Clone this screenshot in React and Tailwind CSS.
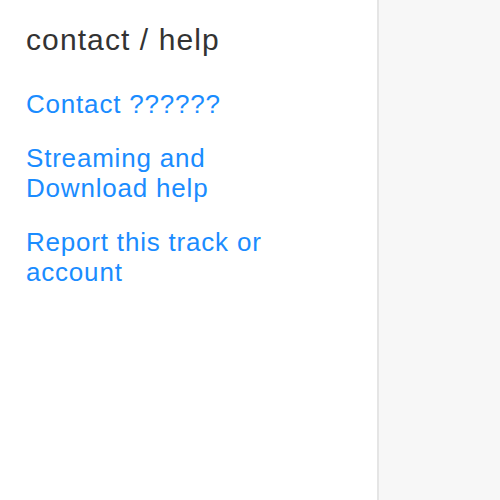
export default function App() {
  return (
    <div className="flex h-[500px] w-[500px] overflow-hidden" style={{ fontFamily: '"Liberation Sans", Arial, sans-serif' }}>
      <div className="w-[379px] shrink-0 border-r-2 border-[#e5e5e5] bg-white pl-[26px] pt-[25px]">
        <h2 className="text-[30px] leading-[30px] tracking-[1.1px] text-[#333333]">contact / help</h2>
        <div className="mt-[34px] flex flex-col gap-[24px] pr-[80px] text-[26px] leading-[30px] tracking-[0.8px] text-[#1a8cff]">
          <a>Contact ??????</a>
          <a>Streaming and Download help</a>
          <a>Report this track or account</a>
        </div>
      </div>
      <div className="flex-1 bg-[#f7f7f7]" />
    </div>
  );
}
